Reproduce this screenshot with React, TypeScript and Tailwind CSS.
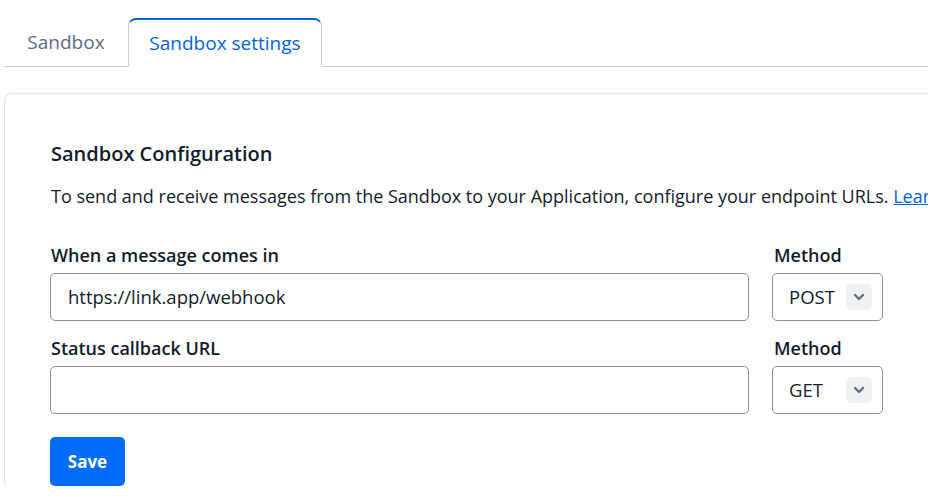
import { ChevronDown } from "lucide-react";

function MethodSelect({ value }: { value: string }) {
  return (
    <div className="flex h-[48px] w-[111px] items-center justify-between rounded-[5px] border border-[#8891aa] bg-white pl-[16px] pr-[10px] text-[18.5px] text-[#121c2d]">
      <span>{value}</span>
      <span className="flex h-[26px] w-[26px] items-center justify-center rounded-[5px] bg-[#f0f1f5]">
        <ChevronDown className="size-[16px] text-[#606b85]" strokeWidth={3.5} />
      </span>
    </div>
  );
}

function Field({ label, value, method }: { label: string; value: string; method: string }) {
  return (
    <div className="flex gap-[23px]">
      <div className="flex w-[699px] flex-col gap-[7px]">
        <label className="pl-px text-[18px] font-semibold leading-[22px] text-[#121c2d]">{label}</label>
        <div className="flex h-[48px] items-center rounded-[5px] border border-[#8891aa] bg-white px-[17px] text-[18.5px] text-[#121c2d]">
          {value}
        </div>
      </div>
      <div className="flex flex-col gap-[7px]">
        <label className="pl-[2px] text-[18px] font-semibold leading-[22px] text-[#121c2d]">Method</label>
        <MethodSelect value={method} />
      </div>
    </div>
  );
}

export default function App() {
  return (
    <div className="h-[496px] w-[928px] overflow-hidden bg-white font-['Open_Sans',sans-serif]">
      <div className="ml-[4px] flex h-[67px] items-end border-b border-[#cacdd8]">
        <button className="flex h-[48px] w-[124px] items-center justify-center text-[19px] text-[#606b85]">
          Sandbox
        </button>
        <button className="-mb-px flex h-[49px] w-[194px] items-center justify-center rounded-t-[8px] border border-b-white border-[#cacdd8] border-t-[2px] border-t-[#0263e0] bg-white text-[19px] text-[#0263e0]">
          Sandbox settings
        </button>
      </div>
      <div className="ml-[4px] mt-[26px] rounded-tl-[8px] border-l border-t border-[#e1e3ea] pl-[45px] pt-[47px]">
        <h2 className="pl-px text-[20px] font-semibold leading-[26px] text-[#121c2d]">Sandbox Configuration</h2>
        <p className="mt-[17px] whitespace-nowrap pl-px text-[18px] leading-[24px] text-[#121c2d]">
          To send and receive messages from the Sandbox to your Application, configure your endpoint URLs.{" "}
          <a className="text-[#0263e0] underline">Learn more</a>
        </p>
        <div className="mt-[36px] flex flex-col gap-[16px]">
          <Field label="When a message comes in" value="https://link.app/webhook" method="POST" />
          <Field label="Status callback URL" value="" method="GET" />
        </div>
        <button className="mt-[23px] h-[49px] w-[75px] rounded-[5px] bg-[#006dfa] text-[17px] font-bold text-white">
          Save
        </button>
      </div>
    </div>
  );
}
